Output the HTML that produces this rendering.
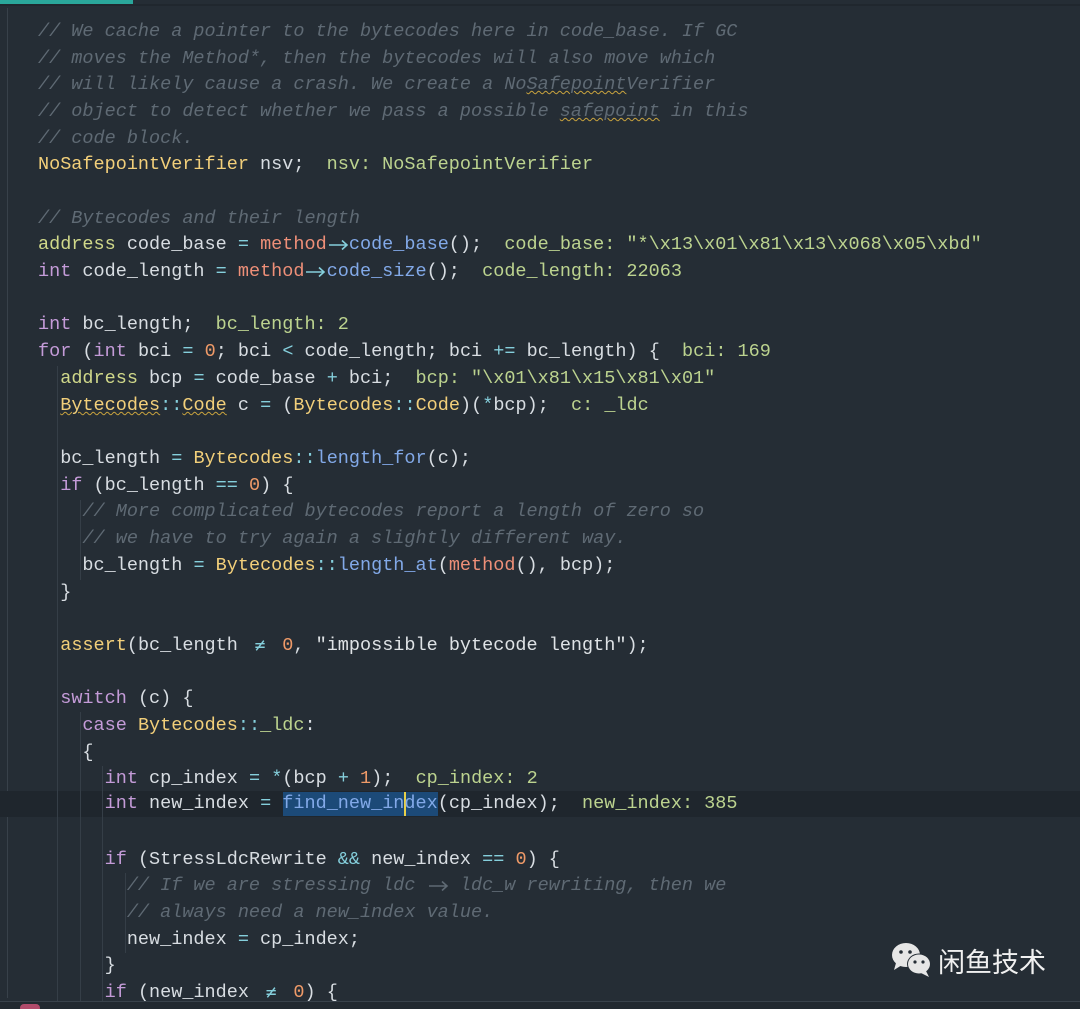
<!DOCTYPE html>
<html><head><meta charset="utf-8"><style>
html,body{margin:0;padding:0;background:#252d35;width:1080px;height:1009px;overflow:hidden;position:relative}
.l{position:absolute;left:38px;height:26px;line-height:26px;white-space:pre;font-family:"Liberation Mono",monospace;font-size:18.5px;color:#d8dde2}
.c{color:#5f6a74;font-style:italic}
.k{color:#c49bd8}
.t{color:#d0d88a}
.y{color:#f2cf7a}
.h{color:#bcd38f}
.m{color:#ee8f78}
.f{color:#82a9e8}
.o{color:#85cfdc}
.n{color:#ef9a68}
.s{color:#dfe3e6}
.w{display:inline-block;width:22.2px;text-align:center;font-family:"DejaVu Sans Mono",monospace;font-size:18px;line-height:20px;vertical-align:top;margin-top:3px}
.a{display:inline-block;width:22.2px;height:20px;vertical-align:top;margin-top:3px;position:relative}
.a svg{position:absolute;left:1px;top:4px}
.u{text-decoration:underline wavy #c9a33e;text-decoration-thickness:1px}
.g{position:absolute;width:1px;background:#353e47}
</style></head><body>
<div style="position:absolute;left:0;top:0;width:133px;height:4px;background:#2aa79b"></div>
<div style="position:absolute;left:0;top:4px;width:1080px;height:2px;background:#20272e"></div>
<div style="position:absolute;left:7px;top:8px;width:1px;height:990px;background:#38414a"></div>
<div style="position:absolute;left:0;top:791px;width:1080px;height:26px;background:#1f262d"></div>
<div style="position:absolute;left:283px;top:792px;width:155px;height:24px;background:#1c4a78"></div>
<div style="position:absolute;left:404px;top:792px;width:2px;height:24px;background:#e8d04a"></div>
<div class="g" style="left:57px;top:366px;height:640px"></div>
<div class="g" style="left:80px;top:500px;height:80px"></div>
<div class="g" style="left:80px;top:712px;height:295px"></div>
<div class="g" style="left:102px;top:766px;height:240px"></div>
<div class="g" style="left:125px;top:873px;height:80px"></div>
<div style="position:absolute;left:0;top:1001px;width:1080px;height:8px;background:#222930;border-top:1px solid #39424b"></div>
<div style="position:absolute;left:20px;top:1004px;width:20px;height:8px;border-radius:4px;background:#b04a6a"></div>

<div class="l c" style="top:19px">// We cache a pointer to the bytecodes here in code_base. If GC</div>
<div class="l c" style="top:46px">// moves the Method*, then the bytecodes will also move which</div>
<div class="l c" style="top:72px">// will likely cause a crash. We create a No<span class="u">Safepoint</span>Verifier</div>
<div class="l c" style="top:99px">// object to detect whether we pass a possible <span class="u">safepoint</span> in this</div>
<div class="l c" style="top:126px">// code block.</div>
<div class="l" style="top:152px"><span class="y">NoSafepointVerifier</span> nsv;  <span class="h">nsv: NoSafepointVerifier</span></div>
<div class="l c" style="top:206px">// Bytecodes and their length</div>
<div class="l" style="top:232px"><span class="t">address</span> code_base <span class="o">=</span> <span class="m">method</span><span class="a"><svg width="21" height="12" viewBox="0 0 21 12"><path d="M1 6H19M14 1.5L19 6L14 10.5" stroke="#85cfdc" stroke-width="1.6" fill="none"/></svg></span><span class="f">code_base</span>();  <span class="h">code_base: "*\x13\x01\x81\x13\x068\x05\xbd"</span></div>
<div class="l" style="top:259px"><span class="k">int</span> code_length <span class="o">=</span> <span class="m">method</span><span class="a"><svg width="21" height="12" viewBox="0 0 21 12"><path d="M1 6H19M14 1.5L19 6L14 10.5" stroke="#85cfdc" stroke-width="1.6" fill="none"/></svg></span><span class="f">code_size</span>();  <span class="h">code_length: 22063</span></div>
<div class="l" style="top:312px"><span class="k">int</span> bc_length;  <span class="h">bc_length: 2</span></div>
<div class="l" style="top:339px"><span class="k">for</span> (<span class="k">int</span> bci <span class="o">=</span> <span class="n">0</span>; bci <span class="o">&lt;</span> code_length; bci <span class="o">+=</span> bc_length) {  <span class="h">bci: 169</span></div>
<div class="l" style="top:366px">  <span class="t">address</span> bcp <span class="o">=</span> code_base <span class="o">+</span> bci;  <span class="h">bcp: "\x01\x81\x15\x81\x01"</span></div>
<div class="l" style="top:393px">  <span class="y u">Bytecodes</span><span class="o">::</span><span class="y u">Code</span> c <span class="o">=</span> (<span class="y">Bytecodes</span><span class="o">::</span><span class="y">Code</span>)(<span class="o">*</span>bcp);  <span class="h">c: _ldc</span></div>
<div class="l" style="top:446px">  bc_length <span class="o">=</span> <span class="y">Bytecodes</span><span class="o">::</span><span class="f">length_for</span>(c);</div>
<div class="l" style="top:473px">  <span class="k">if</span> (bc_length <span class="o">==</span> <span class="n">0</span>) {</div>
<div class="l c" style="top:499px">    // More complicated bytecodes report a length of zero so</div>
<div class="l c" style="top:526px">    // we have to try again a slightly different way.</div>
<div class="l" style="top:553px">    bc_length <span class="o">=</span> <span class="y">Bytecodes</span><span class="o">::</span><span class="f">length_at</span>(<span class="m">method</span>(), bcp);</div>
<div class="l" style="top:580px">  }</div>
<div class="l" style="top:633px">  <span class="y">assert</span>(bc_length <span class="o w">≠</span> <span class="n">0</span>, <span class="s">"impossible bytecode length"</span>);</div>
<div class="l" style="top:686px">  <span class="k">switch</span> (c) {</div>
<div class="l" style="top:713px">    <span class="k">case</span> <span class="y">Bytecodes</span><span class="o">::</span><span class="h">_ldc</span>:</div>
<div class="l" style="top:740px">    {</div>
<div class="l" style="top:766px">      <span class="k">int</span> cp_index <span class="o">=</span> <span class="o">*</span>(bcp <span class="o">+</span> <span class="n">1</span>);  <span class="h">cp_index: 2</span></div>
<div class="l" style="top:791px">      <span class="k">int</span> new_index <span class="o">=</span> <span class="f">find_new_index</span>(cp_index);  <span class="h">new_index: 385</span></div>
<div class="l" style="top:847px">      <span class="k">if</span> (StressLdcRewrite <span class="o">&amp;&amp;</span> new_index <span class="o">==</span> <span class="n">0</span>) {</div>
<div class="l c" style="top:873px">        // If we are stressing ldc <span class="a"><svg width="21" height="12" viewBox="0 0 21 12"><path d="M1 6H19M14 1.5L19 6L14 10.5" stroke="#5f6a74" stroke-width="1.6" fill="none"/></svg></span> ldc_w rewriting, then we</div>
<div class="l c" style="top:900px">        // always need a new_index value.</div>
<div class="l" style="top:927px">        new_index <span class="o">=</span> cp_index;</div>
<div class="l" style="top:953px">      }</div>
<div class="l" style="top:980px">      <span class="k">if</span> (new_index <span class="o w">≠</span> <span class="n">0</span>) {</div>

<svg style="position:absolute;left:890px;top:941px" width="46" height="38" viewBox="0 0 46 38">
<ellipse cx="16" cy="14" rx="14" ry="12" fill="#e6e6e6"/>
<path d="M6 22 L4 29 L12 24Z" fill="#e6e6e6"/>
<ellipse cx="29" cy="23" rx="12" ry="10.5" fill="#252d35"/>
<ellipse cx="29" cy="23" rx="11" ry="9.5" fill="#e6e6e6"/>
<path d="M36 30 L39 36 L31 32Z" fill="#e6e6e6"/>
<circle cx="11" cy="11" r="1.8" fill="#252d35"/><circle cx="20" cy="11" r="1.8" fill="#252d35"/>
<circle cx="25" cy="21" r="1.6" fill="#252d35"/><circle cx="33" cy="21" r="1.6" fill="#252d35"/>
</svg>
<div style="position:absolute;left:938px;top:944px;font-family:'Noto Sans CJK SC',sans-serif;font-size:27px;line-height:34px;color:#f0f0f0">闲鱼技术</div>
</body></html>
